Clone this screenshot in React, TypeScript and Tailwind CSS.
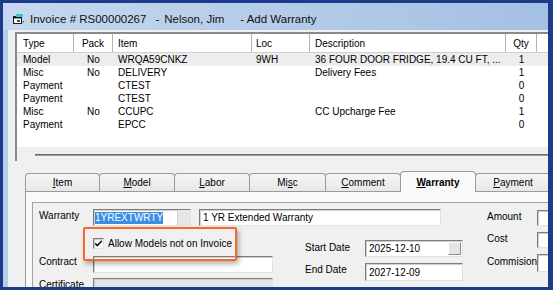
import React from "react";

const colCls = [
  "w-[57px] pl-[6px] text-left",
  "w-[39px] text-center",
  "w-[139px] pl-[5px] text-left",
  "w-[58px] pl-[4px] text-left",
  "w-[196px] pl-[5px] text-left",
  "w-[31px] text-center",
];

const headers = ["Type", "Pack", "Item", "Loc", "Description", "Qty"];

const rows = [
  ["Model", "No", "WRQA59CNKZ", "9WH", "36 FOUR DOOR FRIDGE, 19.4 CU FT, ...", "1"],
  ["Misc", "No", "DELIVERY", "", "Delivery Fees", "1"],
  ["Payment", "", "CTEST", "", "", "0"],
  ["Payment", "", "CTEST", "", "", "0"],
  ["Misc", "No", "CCUPC", "", "CC Upcharge Fee", "1"],
  ["Payment", "", "EPCC", "", "", "0"],
];

function TitleIcon() {
  return (
    <svg width="13" height="12" viewBox="0 0 13 12" className="shrink-0">
      <rect x="1.5" y="3.5" width="8" height="7" fill="#ffffff" stroke="#1a1a1a" />
      <rect x="1.5" y="3.5" width="8" height="2" fill="#1a1a1a" />
      <rect x="4" y="1" width="7" height="3" fill="#33c4cc" />
      <rect x="5" y="7" width="3" height="2" fill="#4a4a4a" />
      <rect x="10.5" y="8" width="1.5" height="1.5" fill="#666666" />
    </svg>
  );
}

const sunken =
  "border border-t-[#7d7d7d] border-l-[#7d7d7d] border-b-[#e2e2e2] border-r-[#e2e2e2] shadow-[inset_1px_1px_0_#cfcfcf]";

function RaisedBtn() {
  return (
    <div className="h-full w-[13px] shrink-0 border border-t-white border-l-white border-b-[#8c8c8c] border-r-[#8c8c8c] bg-[#e4e4e4]" />
  );
}

type TabDef = { key: string; pre: string; u: string; post: string; w: string; active?: boolean };

const tabs: TabDef[] = [
  { key: "item", pre: "", u: "I", post: "tem", w: "w-[75px]" },
  { key: "model", pre: "", u: "M", post: "odel", w: "w-[76px]" },
  { key: "labor", pre: "", u: "L", post: "abor", w: "w-[76px]" },
  { key: "misc", pre: "Mi", u: "s", post: "c", w: "w-[77px]" },
  { key: "comment", pre: "", u: "C", post: "omment", w: "w-[76px]" },
  { key: "warranty", pre: "", u: "W", post: "arranty", w: "w-[76px]", active: true },
  { key: "payment", pre: "", u: "P", post: "ayment", w: "w-[76px]" },
];

export default function App() {
  return (
    <div className="relative h-[290px] w-[553px] overflow-hidden bg-[#1d3b8b] pb-[3px] pl-[3px] pr-[5px] pt-[3px] font-['Liberation_Sans',Arial,sans-serif] text-black">
      <div className="flex h-full flex-col overflow-hidden">
        {/* Title bar */}
        <div className="flex h-[27px] shrink-0 items-center bg-[linear-gradient(90deg,#c5d8ef,#a4c0e3)] pl-[9px] pt-[5px] text-[11.5px] leading-[14px] text-[#111]">
          <TitleIcon />
          <span className="ml-[5px] whitespace-pre">Invoice # RS00000267</span>
          <span className="ml-[9px] whitespace-pre">-</span>
          <span className="ml-[5px] whitespace-pre">Nelson, Jim</span>
          <span className="ml-[16px] whitespace-pre">- Add Warranty</span>
        </div>

        <div className="flex min-h-0 flex-1">
          <div className="w-[5px] shrink-0 bg-[#b7cee9]" />
          <div className="flex min-w-0 flex-1 flex-col overflow-hidden bg-[#f0f0f0]">
            {/* List view */}
            <div className="ml-[7px] mt-[2px] flex h-[129px] shrink-0 flex-col overflow-hidden border-l-2 border-t-2 border-l-[#8a8a8a] border-t-[#8a8a8a] text-[10px] leading-[13px]">
              <div className="flex h-[19px] shrink-0 border-b border-b-[#cfcfcf] bg-white">
                {headers.map((h, i) => (
                  <div
                    key={h}
                    className={`${colCls[i]} flex h-full shrink-0 items-center border-r border-r-[#b4b4b4]`}
                  >
                    <span className={i === 1 || i === 5 ? "w-full text-center" : ""}>{h}</span>
                  </div>
                ))}
                <div className="flex-1 bg-white" />
              </div>
              {rows.map((r, ri) => (
                <div
                  key={ri}
                  className={`flex h-[13px] shrink-0 items-center ${ri === 0 ? "bg-[#ededed]" : "bg-white"}`}
                >
                  {r.map((c, ci) => (
                    <div key={ci} className={`${colCls[ci]} shrink-0 whitespace-pre`}>
                      {c}
                    </div>
                  ))}
                </div>
              ))}
              <div className="h-[16px] shrink-0 bg-white" />
              <div className="h-[14px] shrink-0 bg-[#f0f0f0] pl-[18px] pt-[7px]">
                <div className="h-[1px] bg-[#6b6b6b]" />
                <div className="h-[1px] bg-[#9c9c9c]" />
              </div>
            </div>

            {/* Tabs */}
            <div className="ml-[17px] mt-[10px] flex h-[20px] shrink-0 items-end text-[10px]">
              {tabs.map((t, i) =>
                t.active ? (
                  <div
                    key={t.key}
                    className={`${t.w} relative z-10 -mb-px -ml-px flex h-[21px] shrink-0 items-start justify-center rounded-t-[4px] border border-b-0 border-[#9a9a9a] bg-[#f9f9f9] pt-[5px] font-bold leading-[12px]`}
                  >
                    <span>
                      {t.pre}
                      <span className="underline underline-offset-[1px]">{t.u}</span>
                      {t.post}
                    </span>
                  </div>
                ) : (
                  <div
                    key={t.key}
                    className={`${t.w} ${i === 0 ? "" : "-ml-px"} flex h-[18px] shrink-0 items-start justify-center rounded-t-[4px] border border-b-0 border-[#9a9a9a] bg-[linear-gradient(180deg,#f5f5f5,#e7e7e7)] pt-[3px] leading-[12px]`}
                  >
                    <span>
                      {t.pre}
                      <span className="underline underline-offset-[1px]">{t.u}</span>
                      {t.post}
                    </span>
                  </div>
                )
              )}
            </div>

            {/* Panel */}
            <div className="ml-[17px] flex min-h-0 flex-1 flex-col border-l border-t border-l-[#9a9a9a] border-t-[#9a9a9a] bg-[#f9f9f9] pl-[6px] pt-[10px]">
              <div className="flex min-h-0 flex-1 border-l border-t border-l-[#a3a3a3] border-t-[#a3a3a3] bg-[#f0f0f0] pl-[6px] text-[10px] leading-[11px]">
                {/* Left column */}
                <div className="flex w-[448px] shrink-0 flex-col">
                  <div className="mt-[6px] flex h-[17px] items-start">
                    <div className="w-[54px] shrink-0 pt-[1px]">Warranty</div>
                    <div className={`flex h-[17px] w-[98px] shrink-0 bg-white ${sunken}`}>
                      <div className="flex flex-1 items-center pl-[1px]">
                        <span className="bg-[#3a8ee5] leading-[12px] text-white">1YREXTWRTY</span>
                      </div>
                      <div className="h-full w-[13px] shrink-0 border-l border-l-[#cfcfcf] bg-[#e6e6e6]" />
                    </div>
                    <div className={`ml-[8px] flex h-[17px] w-[242px] shrink-0 items-center bg-white pl-[3px] ${sunken}`}>
                      1 YR Extended Warranty
                    </div>
                  </div>
                  <div className="flex">
                    <div className="flex w-[266px] shrink-0 flex-col">
                      <div className="mt-[12px] flex h-[11px] items-center pl-[54px]">
                        <div className={`flex h-[11px] w-[11px] shrink-0 items-center justify-center bg-white ${sunken}`}>
                          <svg width="9" height="9" viewBox="0 0 9 9">
                            <path d="M1.2 4.4 L3.4 6.6 L7.8 1.8" fill="none" stroke="#111" strokeWidth="1.6" />
                          </svg>
                        </div>
                        <span className="ml-[4px] whitespace-pre">Allow Models not on Invoice</span>
                      </div>
                      <div className="mt-[7px] flex items-start">
                        <div className="w-[54px] shrink-0">Contract</div>
                        <div className={`h-[17px] w-[180px] shrink-0 bg-white ${sunken}`} />
                      </div>
                      <div className="mt-[5px] flex items-start">
                        <div className="w-[54px] shrink-0 pt-[1px]">Certificate</div>
                        <div className={`h-[17px] w-[180px] shrink-0 bg-[#e3e3e3] ${sunken}`} />
                      </div>
                    </div>
                    <div className="flex flex-col">
                      <div className="mt-[14px] flex items-start">
                        <div className="w-[60px] shrink-0 pt-[2px]">Start Date</div>
                        <div className={`flex h-[17px] w-[98px] shrink-0 items-center bg-white pl-[3px] pr-[1px] ${sunken}`}>
                          <span className="flex-1">2025-12-10</span>
                          <div className="h-[13px]">
                            <RaisedBtn />
                          </div>
                        </div>
                      </div>
                      <div className="mt-[6px] flex items-start">
                        <div className="w-[60px] shrink-0 pt-[1px]">End Date</div>
                        <div className={`flex h-[18px] w-[98px] shrink-0 items-center bg-white pl-[3px] ${sunken}`}>
                          2027-12-09
                        </div>
                      </div>
                    </div>
                  </div>
                </div>
                {/* Right column */}
                <div className="flex shrink-0 flex-col">
                  <div className="mt-[7px] flex items-start">
                    <div className="w-[50px] shrink-0 pt-[1px]">Amount</div>
                    <div className={`h-[16px] w-[30px] shrink-0 bg-white ${sunken}`} />
                  </div>
                  <div className="mt-[6px] flex items-start">
                    <div className="w-[50px] shrink-0 pt-[1px]">Cost</div>
                    <div className={`h-[16px] w-[30px] shrink-0 bg-white ${sunken}`} />
                  </div>
                  <div className="mt-[6px] flex items-start">
                    <div className="w-[50px] shrink-0 pt-[2px]">Commision</div>
                    <div className={`h-[18px] w-[30px] shrink-0 bg-white ${sunken}`} />
                  </div>
                </div>
              </div>
            </div>
          </div>
        </div>
      </div>

      {/* Annotation highlight */}
      <div className="pointer-events-none absolute left-[83px] top-[227px] h-[34px] w-[154px] rounded-[2px] border-2 border-[#ef6a2b] shadow-[2px_3px_5px_rgba(0,0,0,0.3)]" />
    </div>
  );
}
